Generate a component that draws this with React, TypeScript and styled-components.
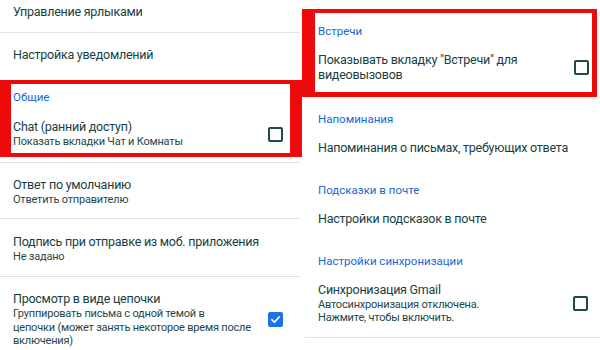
import styled, { createGlobalStyle } from "styled-components";

const GlobalStyle = createGlobalStyle`
  html, body {
    margin: 0;
    padding: 0;
    background: #ffffff;
  }
  body {
    font-family: Roboto, "Noto Sans", sans-serif;
    color: #173f3f;
  }
`;

const Page = styled.div`
  width: 600px;
  height: 350px;
  overflow: hidden;
  display: grid;
  grid-template-columns: 300px 300px;
  background: #ffffff;
`;

// each column sets its own side insets, rows read them from the vars
const Column = styled.div<{ $left: number; $right: number }>`
  --inset-l: ${(p) => p.$left}px;
  --inset-r: ${(p) => p.$right}px;
  display: flex;
  flex-direction: column;
  min-width: 0;
`;

const Highlight = styled.div<{ $border: string; $margin: string; $left: number; $right: number }>`
  --inset-l: ${(p) => p.$left}px;
  --inset-r: ${(p) => p.$right}px;
  border-style: solid;
  border-color: #ee0a0a;
  border-width: ${(p) => p.$border};
  margin: ${(p) => p.$margin};
  display: flex;
  flex-direction: column;
`;

const Row = styled.div<{ $top: number; $bottom: number; $divider?: boolean }>`
  display: flex;
  align-items: center;
  justify-content: space-between;
  gap: 12px;
  padding: ${(p) => p.$top}px var(--inset-r) ${(p) => p.$bottom}px var(--inset-l);
  border-bottom: ${(p) => (p.$divider ? "1px solid #dbe4e4" : "none")};
`;

const Texts = styled.div`
  display: flex;
  flex-direction: column;
  min-width: 0;
`;

const Title = styled.div<{ $lh?: number }>`
  font-size: 12.5px;
  letter-spacing: -0.25px;
  line-height: ${(p) => p.$lh ?? 16}px;
  color: #173f3f;
  white-space: nowrap;
`;

const Sub = styled.div<{ $lh?: number }>`
  font-size: 11px;
  letter-spacing: -0.2px;
  line-height: ${(p) => p.$lh ?? 14}px;
  color: #1d4747;
  white-space: nowrap;
`;

const SectionTitle = styled.div<{ $top: number }>`
  font-size: 11.5px;
  line-height: 14px;
  color: #1967d2;
  padding: ${(p) => p.$top}px var(--inset-r) 0 var(--inset-l);
`;

const Divider = styled.div<{ $gap: number; $indent?: number }>`
  height: 1px;
  background: #dbe4e4;
  margin-top: ${(p) => p.$gap}px;
  margin-left: ${(p) => p.$indent ?? 0}px;
`;

const Box = styled.span<{ $checked?: boolean }>`
  flex: none;
  box-sizing: border-box;
  width: 15px;
  height: 15px;
  border-radius: 2px;
  border: 2px solid ${(p) => (p.$checked ? "#1a73e8" : "#1f4a4a")};
  background: ${(p) => (p.$checked ? "#1a73e8" : "transparent")};
  display: flex;
  align-items: center;
  justify-content: center;
`;

const Checkbox = ({ checked }: { checked?: boolean }) => (
  <Box $checked={checked}>
    {checked && (
      <svg width="11" height="11" viewBox="0 0 12 12">
        <path d="M2 6.2 L4.8 9 L10 3.2" fill="none" stroke="#fff" strokeWidth="1.8" strokeLinecap="round" strokeLinejoin="round" />
      </svg>
    )}
  </Box>
);

const Settings = styled.div`
  display: flex;
  flex-direction: column;
`;

export default function App() {
  return (
    <>
      <GlobalStyle />
      <Page>
        <Column $left={13} $right={17}>
          <Row $top={3} $bottom={11} $divider>
            <Title $lh={18}>Управление ярлыками</Title>
          </Row>
          <Row $top={13} $bottom={16}>
            <Title $lh={18}>Настройка уведомлений</Title>
          </Row>

          <Highlight $border="4px 12px 4px 11px" $margin="0 -2px 0 0" $left={2} $right={7}>
            <SectionTitle $top={6}>Общие</SectionTitle>
            <Row $top={15} $bottom={4}>
              <Texts>
                <Title>Chat (ранний доступ)</Title>
                <Sub>Показать вкладки Чат и Комнаты</Sub>
              </Texts>
              <Checkbox />
            </Row>
          </Highlight>
          <Divider $gap={5} />

          <Row $top={14} $bottom={11} $divider>
            <Texts>
              <Title>Ответ по умолчанию</Title>
              <Sub>Ответить отправителю</Sub>
            </Texts>
          </Row>
          <Row $top={15} $bottom={12} $divider>
            <Texts>
              <Title>Подпись при отправке из моб. приложения</Title>
              <Sub>Не задано</Sub>
            </Texts>
          </Row>
          <Row $top={14} $bottom={12}>
            <Texts>
              <Title>Просмотр в виде цепочки</Title>
              <Sub $lh={13.5}>
                Группировать письма с одной темой в<br />
                цепочки (может занять некоторое время после<br />
                включения)
              </Sub>
            </Texts>
            <Checkbox checked />
          </Row>
        </Column>

        <Column $left={18} $right={12}>
          <Highlight $border="4px 5px 5px 13px" $margin="9px 3px 0 2px" $left={3} $right={3}>
            <SectionTitle $top={11}>Встречи</SectionTitle>
            <Row $top={14} $bottom={10}>
              <Title $lh={15}>
                Показывать вкладку "Встречи" для<br />
                видеовызовов
              </Title>
              <Checkbox />
            </Row>
          </Highlight>

          <Settings>
            <SectionTitle $top={15}>Напоминания</SectionTitle>
            <Row $top={14} $bottom={12}>
              <Title>Напоминания о письмах, требующих ответа</Title>
            </Row>
          </Settings>
          <Settings>
            <SectionTitle $top={15}>Подсказки в почте</SectionTitle>
            <Row $top={14} $bottom={12}>
              <Title>Настройки подсказок в почте</Title>
            </Row>
          </Settings>
          <Settings>
            <SectionTitle $top={15}>Настройки синхронизации</SectionTitle>
            <Row $top={14} $bottom={13}>
              <Texts>
                <Title>Синхронизация Gmail</Title>
                <Sub $lh={13}>
                  Автосинхронизация отключена.<br />
                  Нажмите, чтобы включить.
                </Sub>
              </Texts>
              <Checkbox />
            </Row>
            <Divider $gap={0} $indent={5} />
          </Settings>
        </Column>
      </Page>
    </>
  );
}
